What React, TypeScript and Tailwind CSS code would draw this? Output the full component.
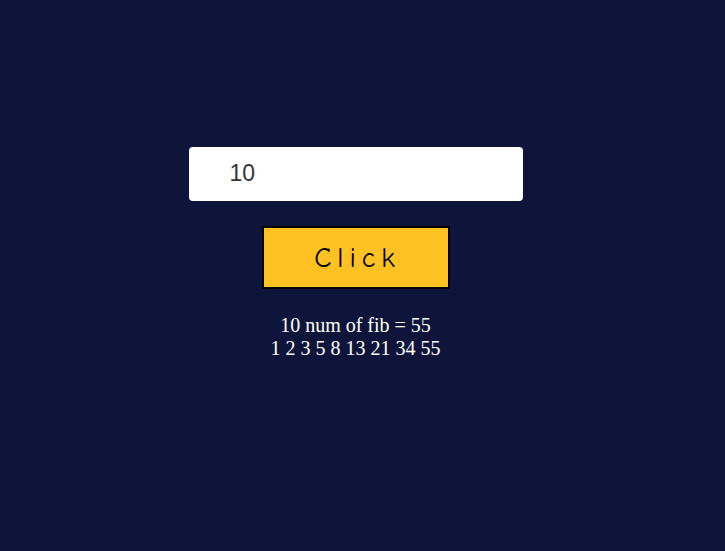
import { useState } from "react";

export default function App() {
  const [value, setValue] = useState("10");
  const seq = [1, 2, 3, 5, 8, 13, 21, 34, 55];

  return (
    <main className="min-h-[551px] w-full bg-[#0f153a]">
      <div className="w-[711px] flex flex-col items-center pt-[147px]">
        <input
          value={value}
          onChange={(e) => setValue(e.target.value)}
          className="w-[334px] h-[54px] rounded-[4px] bg-white pl-[41px] pb-[2px] text-[23px] text-[#333] outline-none font-['Liberation_Sans',Arial,sans-serif]"
        />
        <button className="mt-[25px] w-[188px] h-[63px] border-2 border-black bg-[#ffc222] text-[28px] tracking-[6px] pl-[4px] text-black font-['Comic_Sans_MS','Comic_Neue',cursive]">
          Click
        </button>
        <div className="mt-[25px] text-center text-white text-[20px] leading-[23px] font-['Liberation_Serif','Times_New_Roman',serif]">
          <p>{value} num of fib = 55</p>
          <p>{seq.join(" ")}</p>
        </div>
      </div>
    </main>
  );
}
